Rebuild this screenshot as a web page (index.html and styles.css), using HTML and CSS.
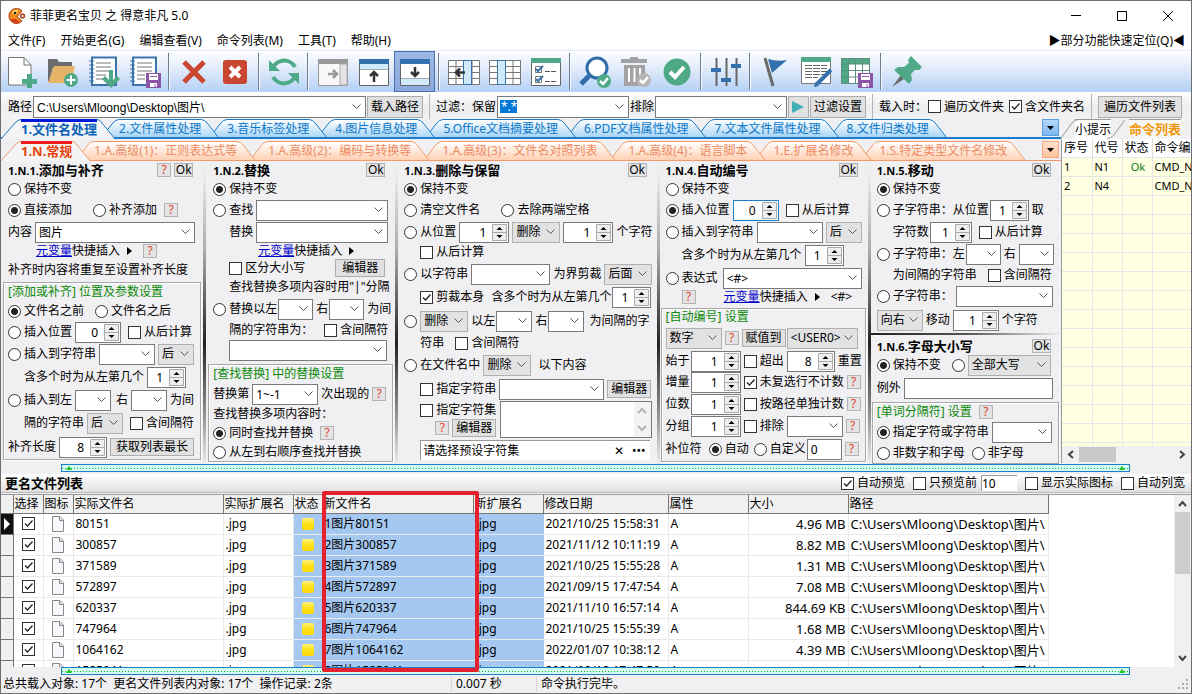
FILE: index.html
```html
<!DOCTYPE html>
<html lang="zh-CN">
<head>
<meta charset="utf-8">
<title>菲菲更名宝贝 之 得意非凡 5.0</title>
<link rel="stylesheet" href="styles.css">
</head>
<body>
<div class="window">
<header class="titlebar">
  <svg class="logo" width="18" height="18" viewBox="0 0 18 18"><path d="M14 4A7.500 7.500 0 1 0 14 14L9 9.500Z" fill="#f28a1c" stroke="#a63a10"/><path d="M2.500 12A7 7 0 0 0 12 15.500L8 12Z" fill="#d93a1a"/><path d="M4 6a5 5 0 0 1 6-3L8 8Z" fill="#ffd75e"/><circle cx="7" cy="6" r="1.300" fill="#222"/><circle cx="14.500" cy="9" r="2.300" fill="#e8542a" stroke="#8c3a20"/><circle cx="14.500" cy="9" r="1" fill="#fff"/></svg>
  <span class="caption">菲菲更名宝贝 之 得意非凡 5.0</span>
  <button class="wbtn" aria-label="最小化"><svg width="12" height="12"><path d="M1 5.500H11" stroke="#000"/></svg></button>
  <button class="wbtn" aria-label="最大化"><svg width="12" height="12"><path d="M1.500 1.500H10.500V10.500H1.500Z" fill="none" stroke="#000"/></svg></button>
  <button class="wbtn" aria-label="关闭"><svg width="12" height="12"><path d="M1 1L11 11M11 1L1 11" stroke="#000"/></svg></button>
</header>
<nav class="menu">
  <button>文件(F)</button><button>开始更名(G)</button><button>编辑查看(V)</button><button>命令列表(M)</button><button>工具(T)</button><button>帮助(H)</button><button class="push">▶部分功能快速定位(Q)◀</button>
</nav>
<div class="toolbar">
  <button aria-label="新建"><svg viewBox="0 0 32 32"><path d="M2.500 1.500H18L25 9V29H2.500Z" fill="#fff" stroke="#777"/><path d="M18 1.500V9H25" fill="none" stroke="#777"/><path d="M21 18h5v5h5v5h-5v4h-5v-4h-5v-5h5Z" fill="#4fa986"/></svg></button>
  <button aria-label="打开文件夹"><svg viewBox="0 0 32 32"><path d="M1 3H10L12 6H25V12H6L2 25H1Z" fill="#6c6c6c"/><path d="M7 10H28L24 27H1Z" fill="#e5b467"/><circle cx="24" cy="24" r="7" fill="#4fa986"/><path d="M24 19.500v9M19.500 24h9" stroke="#fff" stroke-width="2"/></svg></button>
  <button aria-label="载入列表"><svg viewBox="0 0 32 32"><path d="M4 1.500H28V29H4Z" fill="#fff" stroke="#3b72aa" stroke-width="2"/><path d="M8 7H23M8 11H23M8 15H23M8 19H18M8 23H18" stroke="#777"/><path d="M1 5h5M1 9h5M1 13h5M1 17h5M1 21h5M1 25h5" stroke="#3b72aa" stroke-dasharray="2 1"/><path d="M21 14h4v10l4-4 3 3-9 9-9-9 3-3 4 4Z" fill="#4fa986"/></svg></button>
  <button aria-label="保存列表"><svg viewBox="0 0 32 32"><path d="M4 1.500H27V29H4Z" fill="#fff" stroke="#3b72aa" stroke-width="2"/><path d="M8 7H23M8 11H23M8 15H23M8 19H16M8 23H16" stroke="#777"/><path d="M1 5h5M1 9h5M1 13h5M1 17h5M1 21h5M1 25h5" stroke="#3b72aa" stroke-dasharray="2 1"/><path d="M17 17H32V32H17Z" fill="#8a55a5"/><path d="M20 18h9v6h-9ZM21 27h7v4h-7Z" fill="#fff"/><path d="M21 20.500h7M26 28v3" stroke="#8a55a5"/></svg></button>
  <i></i>
  <button aria-label="移除"><svg viewBox="0 0 32 32"><path d="M6 6L26 26M26 6L6 26" stroke="#cb4630" stroke-width="5"/></svg></button>
  <button aria-label="清空"><svg viewBox="0 0 32 32"><rect x="4" y="4" width="24" height="24" rx="3" fill="#cb4630"/><path d="M11 11L21 21M21 11L11 21" stroke="#fff" stroke-width="4"/></svg></button>
  <i></i>
  <button aria-label="刷新"><svg viewBox="0 0 32 32"><path d="M4 14A12.500 12.500 0 0 1 27 11M28 18A12.500 12.500 0 0 1 5 21" fill="none" stroke="#4fa986" stroke-width="4"/><path d="M1 4V15H12ZM31 28V17H20Z" fill="#4fa986"/></svg></button>
  <i></i>
  <button aria-label="右侧面板"><svg viewBox="0 0 32 32"><path d="M1.500 3.500H30.500V29.500H1.500Z" fill="#f8f8f8" stroke="#999"/><path d="M1 3H31V8H1Z" fill="#9a9a9a"/><path d="M23 8h7v21h-7Z" fill="#e4e4e4" stroke="#aaa"/><path d="M11 18H20M16 14l4 4-4 4" fill="none" stroke="#999" stroke-width="2.500"/></svg></button>
  <button aria-label="上部面板"><svg viewBox="0 0 32 32"><path d="M1.500 3.500H30.500V29.500H1.500Z" fill="#fff" stroke="#666"/><path d="M1 3H31V8H1Z" fill="#3470ad"/><path d="M2 8H30V13H2Z" fill="#cfeafa"/><path d="M2 13.500H30" stroke="#aaa"/><path d="M16 26V16M12 20l4-4 4 4" fill="none" stroke="#333" stroke-width="2.500"/></svg></button>
  <button class="pressed" aria-label="下部面板"><svg viewBox="0 0 32 32"><path d="M1.500 3.500H30.500V29.500H1.500Z" fill="#fff" stroke="#666"/><path d="M1 3H31V8H1Z" fill="#3470ad"/><path d="M2 23H30V29H2Z" fill="#cfeafa"/><path d="M2 22.500H30" stroke="#aaa"/><path d="M16 11V20M12 16l4 4 4-4" fill="none" stroke="#333" stroke-width="2.500"/></svg></button>
  <i></i>
  <button aria-label="插入列"><svg viewBox="0 0 32 32"><path d="M.5 4.500H31.500V28.500H.5ZM.5 10.500H31.500M.5 16.500H31.500M.5 22.500H31.500M8 4.500V28M24 4.500V28" fill="#fff" stroke="#777"/><path d="M15.500 4.500H23.500V28.500H15.500Z" fill="#cfeafa" stroke="#3b72aa"/><path d="M17 16.500H8M12 12.500l-4 4 4 4" fill="none" stroke="#333" stroke-width="2.500"/></svg></button>
  <button aria-label="列设置"><svg viewBox="0 0 32 32"><path d="M.5 4.500H31.500V28.500H.5ZM.5 10.500H31.500M.5 16.500H31.500M.5 22.500H31.500M24 4.500V28" fill="#fff" stroke="#777"/><path d="M8.500 4.500H16.500V28.500H8.500Z" fill="#cfeafa" stroke="#3b72aa"/></svg></button>
  <button aria-label="选项"><svg viewBox="0 0 32 32"><path d="M1.500 3.500H30.500V29.500H1.500Z" fill="#fff" stroke="#666"/><path d="M1 2H31V7H1Z" fill="#4fa986"/><path d="M5.500 10.500h6v6h-6ZM5.500 20.500h6v6h-6Z" fill="none" stroke="#777"/><path d="M6 13l2 2 5-5M6 23l2 2 5-5" fill="none" stroke="#3470ad" stroke-width="2"/><path d="M15 15.500h5M21 15.500h5M15 25.500h5M21 25.500h5" stroke="#555"/></svg></button>
  <i></i>
  <button aria-label="预览"><svg viewBox="0 0 32 32"><circle cx="18" cy="12" r="10" fill="#fff" stroke="#2f6da8" stroke-width="3"/><path d="M10 20L2 28" stroke="#2f6da8" stroke-width="5"/><circle cx="25" cy="25" r="7" fill="#4fa986"/><path d="M21 25l3 3 5-6" fill="none" stroke="#fff" stroke-width="2.500"/></svg></button>
  <button aria-label="清理"><svg viewBox="0 0 32 32"><path d="M10 1h8v2h9v4H1V3h9ZM4 9H25V30H4Z" fill="#a3a3a3"/><path d="M9 12V26M14.500 12V26M20 12V20" stroke="#fff" stroke-width="2"/><circle cx="24" cy="24" r="7" fill="#b5b5b5"/><path d="M20 24l3 3 5-6" fill="none" stroke="#fff" stroke-width="2.500"/></svg></button>
  <button aria-label="执行"><svg viewBox="0 0 32 32"><circle cx="16" cy="16" r="13.500" fill="#4fa986"/><path d="M9 16l5 5 9-10" fill="none" stroke="#fff" stroke-width="4"/></svg></button>
  <i></i>
  <button aria-label="调整"><svg viewBox="0 0 32 32"><path d="M6.500 2V30M16.500 2V30M26.500 2V30" stroke="#666" stroke-width="2"/><path d="M1 12h10v4H1ZM11 22h10v4H11ZM21 8h10v4H21Z" fill="#3470ad"/></svg></button>
  <i></i>
  <button aria-label="标记"><svg viewBox="0 0 32 32"><path d="M6 2L14 30" stroke="#6b6b6b" stroke-width="3"/><path d="M9 3Q18 6 28 4L13 17Z" fill="#3470ad"/></svg></button>
  <button aria-label="编辑表格"><svg viewBox="0 0 32 32"><path d="M1.500 2.500H30.500V27.500H1.500Z" fill="#fff" stroke="#777"/><path d="M1 1H31V6H1Z" fill="#4fa986"/><path d="M5 9.500H27M5 12.500H27M5 15.500H27M5 18.500H27M5 21.500H18" stroke="#666" stroke-dasharray="7 1"/><path d="M31 14L17 28" stroke="#3470ad" stroke-width="4"/><path d="M14 31l1-5 4 4Z" fill="#3470ad"/></svg></button>
  <button aria-label="保存表格"><svg viewBox="0 0 32 32"><path d="M.5 2.500H28.500V27.500H.5Z" fill="#fff"/><path d="M0 2H29V8H0ZM0 2H7V28H0Z" fill="#4fa986"/><path d="M.5 2.500H28.500V27.500H.5ZM.5 8H28M.5 14.500H28M.5 21H28M7.500 2V28M14.500 2V28M21.500 2V28" fill="none" stroke="#5b8f7b"/><path d="M17 17H32V32H17Z" fill="#8a55a5"/><path d="M20 18h9v6h-9ZM21 27h7v4h-7Z" fill="#fff"/><path d="M21 20.500h7M26 28v3" stroke="#8a55a5"/></svg></button>
  <i></i>
  <button aria-label="置顶"><svg viewBox="0 0 32 32"><path d="M11 19L2 31L14 23Z" fill="#6b6b6b"/><path d="M21 0L32 11L29 14L25 14L21 18L22 24L19 28L4 14L8 11L14 11L19 7L18 4Z" fill="#4fa986"/></svg></button>
</div>
<div class="pathbar">
  <label for="path">路径</label><input id="path" class="combo grow" value="C:\Users\Mloong\Desktop\图片\">
  <button class="btn w56">载入路径</button><i></i>
  <label for="keep">过滤：保留</label><input id="keep" class="combo w132 hilite" value="*.*">
  <label for="drop">排除</label><input id="drop" class="combo w132">
  <button class="btn play" aria-label="应用过滤"></button><button class="btn w56">过滤设置</button><i></i>
  <span>载入时：</span><label class="opt"><input type="checkbox">遍历文件夹</label><label class="opt m4"><input type="checkbox" checked>含文件夹名</label><i></i>
  <button class="btn w84">遍历文件列表</button>
</div>
<main class="main">
<section class="left">
  <div class="tabs blue">
    <button class="on">1.文件名处理</button><button>2.文件属性处理</button><button>3.音乐标签处理</button><button>4.图片信息处理</button><button>5.Office文档摘要处理</button><button>6.PDF文档属性处理</button><button>7.文本文件属性处理</button><button>8.文件归类处理</button><button class="more" aria-label="更多"></button>
  </div>
  <div class="tabs orange">
    <button class="on">1.N.常规</button><button>1.A.高级(1)：正则表达式等</button><button class="wide">1.A.高级(2)：编码与转换等</button><button class="wide">1.A.高级(3)：文件名对照列表</button><button class="wide">1.A.高级(4)：语言脚本</button><button>1.E.扩展名修改</button><button>1.S.特定类型文件名修改</button><button class="more" aria-label="更多"></button>
  </div>
  <div class="groups">
    <fieldset class="g">
      <div class="r h18"><b><small>1.N.1.</small>添加与补齐</b><button class="q push">?</button><button class="ok">Ok</button></div>
      <div class="r h20"><label class="opt"><input type="radio" name="a">保持不变</label></div>
      <div class="r h22"><label class="opt"><input type="radio" name="a" checked>直接添加</label><label class="opt m20"><input type="radio" name="a">补齐添加</label><button class="q m4">?</button></div>
      <div class="r h22"><label for="c1">内容</label><input id="c1" class="combo w160" value="图片"></div>
      <div class="r h16 i28"><span><a href="#">元变量</a>快捷插入</span><span class="tri"></span><button class="q m8">?</button></div>
      <div class="r h22"><span>补齐时内容将重复至设置补齐长度</span></div>
      <div class="sub">
        <div class="r h18 green">[添加或补齐] 位置及参数设置</div>
        <div class="r h20"><label class="opt"><input type="radio" name="a2" checked>文件名之前</label><label class="opt m8"><input type="radio" name="a2">文件名之后</label></div>
        <div class="r h22"><label class="opt"><input type="radio" name="a2">插入位置</label><input class="spin w46" value="0" aria-label="位置"><label class="opt m4"><input type="checkbox">从后计算</label></div>
        <div class="r h22"><label class="opt"><input type="radio" name="a2">插入到字符串</label><input class="combo w56" aria-label="字符串"><select class="w36" aria-label="前后"><option>后</option></select></div>
        <div class="r h24 i16"><span>含多个时为从左第几个</span><input class="spin w39" value="1" aria-label="第几个"></div>
        <div class="r h22"><label class="opt"><input type="radio" name="a2">插入到左</label><input class="combo w36" aria-label="左"><span class="m1">右</span><input class="combo w36" aria-label="右"><span>为间</span></div>
        <div class="r h24 i16"><span>隔的字符串</span><select class="w36" aria-label="前后"><option>后</option></select><label class="opt m4"><input type="checkbox">含间隔符</label></div>
        <div class="r h24"><label for="len">补齐长度</label><input id="len" class="spin w48" value="8"><button class="btn w84">获取列表最长</button></div>
      </div>
    </fieldset>
    <fieldset class="g">
      <div class="r h18"><b><small>1.N.2.</small>替换</b><button class="ok push">Ok</button></div>
      <div class="r h20"><label class="opt"><input type="radio" name="b" checked>保持不变</label></div>
      <div class="r h22"><label class="opt"><input type="radio" name="b">查找</label><input class="combo w132" aria-label="查找"></div>
      <div class="r h22 i16"><label for="rep">替换</label><input id="rep" class="combo w132"></div>
      <div class="r h16 i45"><span><a href="#">元变量</a>快捷插入</span><span class="tri"></span></div>
      <div class="r h18 i16"><label class="opt"><input type="checkbox">区分大小写</label><button class="btn w50 push">编辑器</button></div>
      <div class="r h20 i16"><span>查找替换多项内容时用"|"分隔</span></div>
      <div class="r h24"><label class="opt"><input type="radio" name="b">替换以左</label><input class="combo w35 tight" aria-label="左"><span>右</span><input class="combo w35 tight" aria-label="右"><span>为间</span></div>
      <div class="r h18 i16"><span>隔的字符串为：</span><label class="opt m8"><input type="checkbox">含间隔符</label></div>
      <div class="r h22 i16"><input class="combo w158" aria-label="替换为"></div>
      <div class="sub t3">
        <div class="r h18 green">[查找替换] 中的替换设置</div>
        <div class="r h22"><span>替换第</span><input class="combo w66" value="1~-1" aria-label="次数"><span>次出现的</span><button class="q">?</button></div>
        <div class="r h18"><span>查找替换多项内容时：</span></div>
        <div class="r h20"><label class="opt"><input type="radio" name="b2" checked>同时查找并替换</label><button class="q m4">?</button></div>
        <div class="r h18"><label class="opt"><input type="radio" name="b2">从左到右顺序查找并替换</label></div>
      </div>
    </fieldset>
    <fieldset class="g">
      <div class="r h18"><b><small>1.N.3.</small>删除与保留</b><button class="ok push">Ok</button></div>
      <div class="r h20"><label class="opt"><input type="radio" name="c" checked>保持不变</label></div>
      <div class="r h22"><label class="opt"><input type="radio" name="c">清空文件名</label><label class="opt m20"><input type="radio" name="c">去除两端空格</label></div>
      <div class="r h22"><label class="opt"><input type="radio" name="c">从位置</label><input class="spin w50" value="1" aria-label="位置"><select class="w48" aria-label="操作"><option>删除</option></select><input class="spin w50" value="1" aria-label="个数"><span>个字符</span></div>
      <div class="r h18 i16"><label class="opt"><input type="checkbox">从后计算</label></div>
      <div class="r h26"><label class="opt"><input type="radio" name="c">以字符串</label><input class="combo w79" aria-label="字符串"><span>为界剪裁</span><select class="w48" aria-label="方向"><option>后面</option></select></div>
      <div class="r h20 i16"><label class="opt"><input type="checkbox" checked>剪裁本身</label><span class="m4">含多个时为从左第几个</span><input class="spin w39 tight" value="1" aria-label="第几个"></div>
      <div class="r h28"><input type="radio" name="c" aria-label="按间隔"><select class="w48" aria-label="操作"><option>删除</option></select><span>以左</span><input class="combo w36 tight" aria-label="左"><span>右</span><input class="combo w36 tight" aria-label="右"><span class="m1">为间隔的字</span></div>
      <div class="r h16 i16"><span>符串</span><label class="opt m8"><input type="checkbox">含间隔符</label></div>
      <div class="r h28"><label class="opt"><input type="radio" name="c">在文件名中</label><select class="w48" aria-label="操作"><option>删除</option></select><span class="m4">以下内容</span></div>
      <div class="r h20 i16"><label class="opt"><input type="checkbox">指定字符串</label><input class="combo w105" aria-label="指定字符串"><button class="btn w44">编辑器</button></div>
      <div class="charset i16"><div><div class="r h18"><label class="opt"><input type="checkbox">指定字符集</label></div><div class="r h18 endx"><button class="q">?</button><button class="btn w44">编辑器</button></div></div><textarea aria-label="指定字符集"></textarea></div>
      <div class="preset"><span>请选择预设字符集</span><button class="push" aria-label="清除">✕</button><button aria-label="更多">•••</button></div>
    </fieldset>
    <fieldset class="g">
      <div class="r h18"><b><small>1.N.4.</small>自动编号</b><button class="ok push">Ok</button></div>
      <div class="r h20"><label class="opt"><input type="radio" name="d">保持不变</label></div>
      <div class="r h22"><label class="opt"><input type="radio" name="d" checked>插入位置</label><input class="spin w46 focus" value="0" aria-label="位置"><label class="opt m4"><input type="checkbox">从后计算</label></div>
      <div class="r h22"><label class="opt"><input type="radio" name="d">插入到字符串</label><input class="combo w66" aria-label="字符串"><select class="w36" aria-label="前后"><option>后</option></select></div>
      <div class="r h24 i16"><span>含多个时为从左第几个</span><input class="spin w39" value="1" aria-label="第几个"></div>
      <div class="r h22"><label class="opt"><input type="radio" name="d">表达式</label><input class="combo w139 m1" value="&lt;#&gt;" aria-label="表达式"></div>
      <div class="r h16 i16"><button class="q">?</button><span class="m25"><a href="#">元变量</a>快捷插入</span><span class="tri"></span><span class="m8">&lt;#&gt;</span></div>
      <div class="sub t3">
        <div class="r h16 green">[自动编号] 设置</div>
        <div class="r h26"><select class="w56" aria-label="类型"><option>数字</option></select><button class="q">?</button><button class="btn w44">赋值到</button><select class="w70 tight" aria-label="变量"><option>&lt;USER0&gt;</option></select></div>
        <div class="r h20"><label for="n1">始于</label><input id="n1" class="spin w50 tight" value="1"><label class="opt"><input type="checkbox">超出</label><input class="spin w48" value="8" aria-label="超出"><span>重置</span></div>
        <div class="r h22"><label for="n2">增量</label><input id="n2" class="spin w50 tight" value="1"><label class="opt"><input type="checkbox" checked>未复选行不计数</label><button class="q">?</button></div>
        <div class="r h22"><label for="n3">位数</label><input id="n3" class="spin w50 tight" value="1"><label class="opt"><input type="checkbox">按路径单独计数</label><button class="q">?</button></div>
        <div class="r h22"><label for="n4">分组</label><input id="n4" class="spin w50 tight" value="1"><label class="opt"><input type="checkbox">排除</label><input class="combo w56" aria-label="排除"><button class="q">?</button></div>
        <div class="r h24"><span>补位符</span><label class="opt m4"><input type="radio" name="d2" checked>自动</label><label class="opt m1"><input type="radio" name="d2">自定义</label><input class="txt w35 tight" value="0" aria-label="自定义"><button class="q">?</button></div>
      </div>
    </fieldset>
    <fieldset class="g">
      <div class="r h18"><b><small>1.N.5.</small>移动</b><button class="ok push">Ok</button></div>
      <div class="r h20"><label class="opt"><input type="radio" name="e" checked>保持不变</label></div>
      <div class="r h22"><label class="opt"><input type="radio" name="e">子字符串：从位置</label><input class="spin w39 tight" value="1" aria-label="位置"><span>取</span></div>
      <div class="r h22 i16"><span>字符数</span><input class="spin w42 tight" value="1" aria-label="字符数"><label class="opt m4"><input type="checkbox">从后计算</label></div>
      <div class="r h22"><label class="opt"><input type="radio" name="e">子字符串：左</label><input class="combo w35 tight" aria-label="左"><span>右</span><input class="combo w35" aria-label="右"></div>
      <div class="r h20 i16"><span>为间隔的字符串</span><label class="opt m8"><input type="checkbox">含间隔符</label></div>
      <div class="r h22"><label class="opt"><input type="radio" name="e">子字符串：</label><input class="combo w97" aria-label="子字符串"></div>
      <div class="r h26"><select class="w46" aria-label="方向"><option>向右</option></select><span>移动</span><input class="spin w46" value="1" aria-label="字符数"><span>个字符</span></div>
      <div class="divider"></div>
      <div class="r h18"><b><small>1.N.6.</small>字母大小写</b><button class="ok push">Ok</button></div>
      <div class="r h20"><label class="opt"><input type="radio" name="f" checked>保持不变</label><input class="m8" type="radio" name="f" aria-label="转换大小写"><select class="w83" aria-label="大小写"><option>全部大写</option></select></div>
      <div class="r h26"><label for="ex">例外</label><input id="ex" class="txt w149"></div>
      <div class="sub">
        <div class="r h18 green">[单词分隔符] 设置<button class="q m4">?</button></div>
        <div class="r h22"><label class="opt"><input type="radio" name="f2" checked>指定字符或字符串</label><input class="combo w60" aria-label="字符"></div>
        <div class="r h20"><label class="opt"><input type="radio" name="f2">非数字和字母</label><label class="opt m4"><input type="radio" name="f2">非字母</label></div>
      </div>
    </fieldset>
  </div>
</section>
<aside class="right">
  <div class="tabs gray"><button>小提示</button><button class="on">命令列表</button></div>
  <div class="cmds">
    <table>
      <thead><tr><th>序号</th><th>代号</th><th>状态</th><th>命令编</th></tr></thead>
      <tbody>
        <tr><td>1</td><td>N1</td><td class="okc">Ok</td><td>CMD_N</td></tr>
        <tr><td>2</td><td>N4</td><td></td><td>CMD_N</td></tr>
        <tr><td></td><td></td><td></td><td></td></tr><tr><td></td><td></td><td></td><td></td></tr><tr><td></td><td></td><td></td><td></td></tr><tr><td></td><td></td><td></td><td></td></tr><tr><td></td><td></td><td></td><td></td></tr><tr><td></td><td></td><td></td><td></td></tr><tr><td></td><td></td><td></td><td></td></tr><tr><td></td><td></td><td></td><td></td></tr><tr><td></td><td></td><td></td><td></td></tr><tr><td></td><td></td><td></td><td></td></tr><tr><td></td><td></td><td></td><td></td></tr><tr><td></td><td></td><td></td><td></td></tr><tr><td></td><td></td><td></td><td></td></tr><tr><td></td><td></td><td></td><td></td></tr>
      </tbody>
    </table>
  </div>
  <div class="hscroll"><svg width="9" height="9"><path d="M6 1L2 4.500L6 8" fill="none" stroke="#444" stroke-width="2"/></svg><span class="thumb"></span><svg width="9" height="9"><path d="M3 1L7 4.500L3 8" fill="none" stroke="#444" stroke-width="2"/></svg></div>
</aside>
</main>
<div class="splitter"></div>
<div class="listbar">
  <b>更名文件列表</b>
  <label class="opt push"><input type="checkbox" checked>自动预览</label><label class="opt m4"><input type="checkbox">只预览前</label><input class="num" value="10" aria-label="预览数量"><label class="opt m4"><input type="checkbox">显示实际图标</label><label class="opt m4"><input type="checkbox">自动列宽</label>
</div>
<section class="list">
  <div class="scroll">
  <table class="files">
    <colgroup><col class="c12"><col class="c30"><col class="c30"><col class="c150"><col class="c70"><col class="c29"><col class="c151"><col class="c70"><col class="c125"><col class="c80"><col class="c100"><col class="c200"></colgroup>
    <thead><tr><th></th><th>选择</th><th>图标</th><th>实际文件名</th><th>实际扩展名</th><th>状态</th><th>新文件名</th><th>新扩展名</th><th>修改日期</th><th>属性</th><th>大小</th><th>路径</th></tr></thead>
    <tbody>
      <tr class="cur"><th></th><td><input type="checkbox" checked aria-label="选择"></td><td><i class="page"></i></td><td>80151</td><td>.jpg</td><td class="n"><i class="st"></i></td><td class="n">1图片80151</td><td class="n">.jpg</td><td>2021/10/25 15:58:31</td><td>A</td><td class="sz">4.96 MB</td><td class="loc">C:\Users\Mloong\Desktop\图片\</td></tr>
      <tr><th></th><td><input type="checkbox" checked aria-label="选择"></td><td><i class="page"></i></td><td>300857</td><td>.jpg</td><td class="n"><i class="st"></i></td><td class="n">2图片300857</td><td class="n">.jpg</td><td>2021/11/12 10:11:19</td><td>A</td><td class="sz">8.82 MB</td><td class="loc">C:\Users\Mloong\Desktop\图片\</td></tr>
      <tr><th></th><td><input type="checkbox" checked aria-label="选择"></td><td><i class="page"></i></td><td>371589</td><td>.jpg</td><td class="n"><i class="st"></i></td><td class="n">3图片371589</td><td class="n">.jpg</td><td>2021/10/25 15:55:28</td><td>A</td><td class="sz">1.31 MB</td><td class="loc">C:\Users\Mloong\Desktop\图片\</td></tr>
      <tr><th></th><td><input type="checkbox" checked aria-label="选择"></td><td><i class="page"></i></td><td>572897</td><td>.jpg</td><td class="n"><i class="st"></i></td><td class="n">4图片572897</td><td class="n">.jpg</td><td>2021/09/15 17:47:54</td><td>A</td><td class="sz">7.08 MB</td><td class="loc">C:\Users\Mloong\Desktop\图片\</td></tr>
      <tr><th></th><td><input type="checkbox" checked aria-label="选择"></td><td><i class="page"></i></td><td>620337</td><td>.jpg</td><td class="n"><i class="st"></i></td><td class="n">5图片620337</td><td class="n">.jpg</td><td>2021/11/10 16:57:14</td><td>A</td><td class="sz">844.69 KB</td><td class="loc">C:\Users\Mloong\Desktop\图片\</td></tr>
      <tr><th></th><td><input type="checkbox" checked aria-label="选择"></td><td><i class="page"></i></td><td>747964</td><td>.jpg</td><td class="n"><i class="st"></i></td><td class="n">6图片747964</td><td class="n">.jpg</td><td>2021/10/25 15:55:39</td><td>A</td><td class="sz">1.68 MB</td><td class="loc">C:\Users\Mloong\Desktop\图片\</td></tr>
      <tr><th></th><td><input type="checkbox" checked aria-label="选择"></td><td><i class="page"></i></td><td>1064162</td><td>.jpg</td><td class="n"><i class="st"></i></td><td class="n">7图片1064162</td><td class="n">.jpg</td><td>2022/01/07 10:38:12</td><td>A</td><td class="sz">4.39 MB</td><td class="loc">C:\Users\Mloong\Desktop\图片\</td></tr>
      <tr><th></th><td><input type="checkbox" checked aria-label="选择"></td><td><i class="page"></i></td><td>1585041</td><td>.jpg</td><td class="n"><i class="st"></i></td><td class="n">8图片1585041</td><td class="n">.jpg</td><td>2021/08/18 17:47:50</td><td>A</td><td class="sz">3.45 MB</td><td class="loc">C:\Users\Mloong\Desktop\图片\</td></tr>
    </tbody>
  </table>
  </div>
  <div class="vscroll"><svg width="9" height="9"><path d="M1 6L4.500 2L8 6" fill="none" stroke="#444" stroke-width="2"/></svg><span class="thumb"></span><svg width="9" height="9"><path d="M1 3L4.500 7L8 3" fill="none" stroke="#444" stroke-width="2"/></svg></div>
  <div class="mark"></div>
</section>
<div class="splitter"></div>
<footer class="status"><span class="s1">总共载入对象: 17个&nbsp; 更名文件列表内对象: 17个&nbsp; 操作记录: 2条</span><span class="s2">0.007 秒</span><span class="s3">命令执行完毕。</span><svg width="12" height="12"><path d="M9 1h2v2h-2ZM5 5h2v2h-2ZM9 5h2v2h-2ZM1 9h2v2h-2ZM5 9h2v2h-2ZM9 9h2v2h-2Z" fill="#aaa"/></svg></footer>
</div>
</body>
</html>
```
FILE: styles.css
```css
* { box-sizing: border-box; }
body { margin: 0; }
body, button, input, select, textarea { font: 12px/16px "Noto Sans", "Noto Sans CJK SC", sans-serif; color: #000; }
button, input, select { margin: 0; padding: 0; }
button { white-space: nowrap; }
.window { display: flex; flex-direction: column; height: 100vh; overflow: hidden; border: 1px solid #6e6e6e; background: #f0eff1; white-space: nowrap; }
.push { margin-left: auto; }

.titlebar { display: flex; align-items: center; height: 30px; flex: none; background: #fff; padding-left: 7px; }
.caption { margin: 0 auto 0 4px; }
.wbtn { width: 46px; height: 30px; border: 0; background: none; }
.wbtn svg { display: block; margin: auto; }
.menu { display: flex; align-items: center; gap: 15px; height: 19px; flex: none; background: #fff; padding: 0 6px 0 7px; }
.menu button { border: 0; background: none; }

.toolbar { display: flex; align-items: stretch; height: 42px; flex: none; border-top: 1px solid #e6ebf2; background: linear-gradient(#fdfeff, #e3edfb 40%, #b3d0f6); }
.toolbar button { width: 41px; flex: none; border: 0; background: none; display: grid; place-items: center; }
.toolbar .pressed { background: linear-gradient(#9db8e4, #8aa8dc); border: 1px solid #4a6eb0; }
.toolbar svg { width: 32px; height: 32px; }
.toolbar i { width: 2px; flex: none; margin: 2px 3px; background: #6f7d91; border-right: 1px solid #f6f9ff; }

.pathbar { display: flex; align-items: center; gap: 1px; height: 27px; flex: none; padding: 2px 9px 0 7px; background: linear-gradient(#fff, #ececee 60%, #f3f3f5); }
.pathbar i { align-self: stretch; width: 1px; margin: 0 5px; background: #b5b5b8; }
.pathbar .combo { height: 22px; }
.pathbar .btn { height: 22px; }

.combo, .spin, .txt { flex: none; height: 21px; border: 1px solid #7a7a7a; border-radius: 0; background: #fff; padding: 0 3px; outline: 0; }
.grow { flex: 1 1 0; min-width: 100px; font-family: "Liberation Sans", "Noto Sans CJK SC", sans-serif; }
.combo { background: #fff url('data:image/svg+xml,<svg xmlns="http://www.w3.org/2000/svg" width="9" height="6"><path d="M.5 .5L4.500 4.500L8.500 .5" fill="none" stroke="%23555"/></svg>') no-repeat right 4px center; padding-right: 16px; }
.combo.hilite { color: #fff; background: url('data:image/svg+xml,<svg xmlns="http://www.w3.org/2000/svg" width="9" height="6"><path d="M.5 .5L4.500 4.500L8.500 .5" fill="none" stroke="%23555"/></svg>') no-repeat right 4px center, linear-gradient(#0078d7, #0078d7) no-repeat 2px center / 17px 13px, #fff; }
.spin { text-align: right; padding-right: 22px; background: #fff url('data:image/svg+xml,<svg xmlns="http://www.w3.org/2000/svg" width="15" height="17"><path d="M.5 .5H14.500V16.500H.5ZM.5 8.500H14.500" fill="%23eee" stroke="%23aaa"/><path d="M4.500 6L7.500 3L10.500 6ZM4.500 11L7.500 14L10.500 11Z"/></svg>') no-repeat right 1px center; }
.spin.focus { border-color: #1c80cc; }
select { appearance: none; flex: none; height: 21px; border: 1px solid #b0b0b0; border-radius: 0; padding: 0 3px; background: #e2e2e3 url('data:image/svg+xml,<svg xmlns="http://www.w3.org/2000/svg" width="9" height="6"><path d="M.5 .5L4.500 4.500L8.500 .5" fill="none" stroke="%23555"/></svg>') no-repeat right 4px center; }
.btn { flex: none; height: 18px; line-height: 14px; border: 1px solid #adadad; background: #e1e1e1; text-align: center; }
.q, .ok { flex: none; height: 14px; line-height: 12px; border: 1px solid #b4b4b4; background: #e3e3e3; }
.q { width: 14px; color: #e8402a; }
.ok { width: 19px; }
.play { width: 21px; background: #e1e1e1 url('data:image/svg+xml,<svg xmlns="http://www.w3.org/2000/svg" width="12" height="12"><path d="M0 0L12 6L0 12Z" fill="%2341b0b8"/></svg>') no-repeat center; }
.opt { display: inline-flex; align-items: center; gap: 3px; flex: none; }
input[type=checkbox], input[type=radio] { appearance: none; flex: none; width: 13px; height: 13px; border: 1px solid #333; background: #fff; }
input[type=radio] { border-radius: 50%; }
input[type=radio]:checked { background: radial-gradient(circle, #222 3px, #fff 4px); }
input[type=checkbox]:checked { background: #fff url('data:image/svg+xml,<svg xmlns="http://www.w3.org/2000/svg" width="11" height="11"><path d="M2 5.500L4.500 8L9.500 2.500" fill="none" stroke="%23222" stroke-width="1.300"/></svg>') center; }
a { color: #00c; }
.tri { width: 0; height: 0; border: 4px solid transparent; border-left: 5px solid #000; border-right: 0; margin-left: 4px; }

.main { display: flex; flex: none; }
.left { flex: 1; min-width: 0; }
.tabs { display: flex; position: relative; height: 20px; }
.tabs button { position: relative; flex: none; border: 0; line-height: 19px; padding: 0 18px; margin-left: -10px; }
.tabs button:first-child { margin-left: 0; padding-left: 20px; z-index: 9; }
.tabs button:nth-child(2) { z-index: 8; margin-left: -14px; }
.tabs button:nth-child(3) { z-index: 7; }
.tabs button:nth-child(4) { z-index: 6; }
.tabs button:nth-child(5) { z-index: 5; }
.tabs button:nth-child(6) { z-index: 4; }
.tabs button:nth-child(7) { z-index: 3; }
.tabs .wide { margin-left: -5px; }
.tabs .on { font-weight: bold; font-size: 13px; }
.blue { border-bottom: 2px solid #1b7dcb; }
.blue button { color: #0b78c8; background: url('data:image/svg+xml,<svg xmlns="http://www.w3.org/2000/svg" width="18" height="20"><defs><linearGradient id="g" x2="0" y2="1"><stop stop-color="%23fff"/><stop offset="1" stop-color="%23a5d3f5"/></linearGradient></defs><path d="M0 19L11 5Q14 .5 18 .5V20H0Z" fill="url(%23g)"/><path d="M0 19L11 5Q14 .5 18 .5" fill="none" stroke="%231b7dcb"/></svg>') no-repeat left top, url('data:image/svg+xml,<svg xmlns="http://www.w3.org/2000/svg" width="18" height="20"><defs><linearGradient id="g" x2="0" y2="1"><stop stop-color="%23fff"/><stop offset="1" stop-color="%23a5d3f5"/></linearGradient></defs><path d="M18 19L7 5Q4 .5 0 .5V20H18Z" fill="url(%23g)"/><path d="M18 19L7 5Q4 .5 0 .5" fill="none" stroke="%231b7dcb"/></svg>') no-repeat right top, linear-gradient(#1b7dcb 1px, #fff 1px, #a5d3f5) content-box; }
.blue .on { color: #0a62b8; height: 20px; background: url('data:image/svg+xml,<svg xmlns="http://www.w3.org/2000/svg" width="20" height="20"><path d="M0 20L14 4Q17 .5 20 .5V20Z" fill="%23f4f4f6"/><path d="M0 20L14 4Q17 .5 20 .5" fill="none" stroke="%231b7dcb"/></svg>') no-repeat left top, url('data:image/svg+xml,<svg xmlns="http://www.w3.org/2000/svg" width="18" height="20"><path d="M18 20L5 4Q3 .5 0 .5V20Z" fill="%23f4f4f6"/><path d="M18 20L5 4Q3 .5 0 .5" fill="none" stroke="%231b7dcb"/></svg>') no-repeat right top, linear-gradient(#0018d8 3px, #f4f4f6 3px) content-box; }
.orange { margin-top: 2px; border-bottom: 1px solid #f39a6c; }
.orange button { color: #ee8a60; background: url('data:image/svg+xml,<svg xmlns="http://www.w3.org/2000/svg" width="18" height="20"><defs><linearGradient id="g" x2="0" y2="1"><stop stop-color="%23fff"/><stop offset="1" stop-color="%23ffd0b2"/></linearGradient></defs><path d="M0 19L11 5Q14 .5 18 .5V20H0Z" fill="url(%23g)"/><path d="M0 19L11 5Q14 .5 18 .5" fill="none" stroke="%23f39a6c"/></svg>') no-repeat left top, url('data:image/svg+xml,<svg xmlns="http://www.w3.org/2000/svg" width="18" height="20"><defs><linearGradient id="g" x2="0" y2="1"><stop stop-color="%23fff"/><stop offset="1" stop-color="%23ffd0b2"/></linearGradient></defs><path d="M18 19L7 5Q4 .5 0 .5V20H18Z" fill="url(%23g)"/><path d="M18 19L7 5Q4 .5 0 .5" fill="none" stroke="%23f39a6c"/></svg>') no-repeat right top, linear-gradient(#f39a6c 1px, #fff 1px, #ffd0b2) content-box; }
.orange .on { color: #e8420c; height: 20px; background: url('data:image/svg+xml,<svg xmlns="http://www.w3.org/2000/svg" width="20" height="20"><path d="M0 20L14 4Q17 .5 20 .5V20Z" fill="%23f4f4f6"/><path d="M0 20L14 4Q17 .5 20 .5" fill="none" stroke="%23f39a6c"/></svg>') no-repeat left top, url('data:image/svg+xml,<svg xmlns="http://www.w3.org/2000/svg" width="18" height="20"><path d="M18 20L5 4Q3 .5 0 .5V20Z" fill="%23f4f4f6"/><path d="M18 20L5 4Q3 .5 0 .5" fill="none" stroke="%23f39a6c"/></svg>') no-repeat right top, linear-gradient(#ee1c1c 3px, #f4f4f6 3px) content-box; }
.tabs .more { width: 17px; height: 17px; padding: 0; margin-left: auto; margin-right: 2px; border: 1px solid #5a9ee0; background: url('data:image/svg+xml,<svg xmlns="http://www.w3.org/2000/svg" width="7" height="4"><path d="M0 0H7L3.500 4Z"/></svg>') no-repeat center, linear-gradient(#b5d8fb, #7db8f2); }
.orange .more { border-color: #f5a880; background: url('data:image/svg+xml,<svg xmlns="http://www.w3.org/2000/svg" width="7" height="4"><path d="M0 0H7L3.500 4Z"/></svg>') no-repeat center, linear-gradient(#ffe0cc, #ffc39c); }

.groups { display: grid; grid-template-columns: 205fr 192fr 261fr 211fr 190fr; }
.g { min-width: 0; margin: 0; border: 0; border-right: 3px solid; border-image: linear-gradient(#eee 4%, #aaa 30%, #222 60%, #999 85%, #eee) 1; padding: 0 10px 0 7px; }
.g:nth-child(n+3) { padding-left: 6px; }
.g:last-child { border-right: 0; }
.r { display: flex; align-items: center; gap: 3px; }
.r > * { flex: none; }
.r b { font-size: 13px; }
.r small { font-size: 11px; }
.h16 { height: 16px; } .h18 { height: 18px; } .h20 { height: 20px; } .h22 { height: 22px; }
.h24 { height: 24px; } .h26 { height: 26px; } .h28 { height: 28px; }
.i16 { padding-left: 16px; } .i28 { padding-left: 28px; } .i45 { padding-left: 45px; }
.m1 { margin-left: 2px; } .m4 { margin-left: 4px; } .m8 { margin-left: 8px; } .m20 { margin-left: 18px; } .m25 { margin-left: 25px; }
.tight { margin-left: -2px; }
.w35 { width: 35px; } .w36 { width: 36px; } .w39 { width: 39px; } .w42 { width: 42px; } .w44 { width: 44px; }
.w46 { width: 46px; } .w48 { width: 48px; } .w50 { width: 50px; } .w56 { width: 56px; } .w60 { width: 60px; }
.w66 { width: 66px; } .w70 { width: 71px; } .w79 { width: 79px; } .w83 { width: 83px; } .w84 { width: 84px; }
.w97 { width: 97px; } .w105 { width: 105px; } .w132 { width: 132px; } .w139 { width: 139px; } .w149 { width: 149px; }
.w158 { width: 158px; } .w160 { width: 160px; }
.sub { margin: 1px -8px 0 -5px; padding-left: 4px; border: 1px solid #a8a8a8; box-shadow: inset 1px 1px #fff, 1px 1px #fff; }
.t3 { margin-top: 3px; }
.green { color: #0a8a0a; }
.charset { display: flex; justify-content: space-between; height: 40px; padding-top: 2px; margin-right: -5px; }
.endx { justify-content: flex-end; }
textarea { width: 152px; height: 37px; resize: none; border: 1px solid #7a7a7a; background: #fff url('data:image/svg+xml,<svg xmlns="http://www.w3.org/2000/svg" width="17" height="35"><path d="M0 0H17V35H0Z" fill="%23f3f3f3"/><path d="M4 11L8 7L12 11M4 24L8 28L12 24" fill="none" stroke="%23b5b5b5" stroke-width="2"/></svg>') no-repeat right; }
.preset { display: flex; align-items: center; gap: 8px; height: 20px; margin: 1px -3px 0 16px; padding: 0 4px 0 2px; border: 1px solid #999; border-width: 1px 0 0 1px; background: #fff; }
.preset button { border: 0; background: none; }
.preset .push { margin-left: auto; }
.divider { height: 4px; margin: 0 -10px 0 -6px; background: linear-gradient(90deg, #222, #555 50%, #eee); border-bottom: 2px solid #f0eff1; }

.right { width: 130px; flex: none; display: flex; flex-direction: column; }
.gray { overflow: hidden; }
.gray button { color: #000; background: url('data:image/svg+xml,<svg xmlns="http://www.w3.org/2000/svg" width="18" height="20"><path d="M0 19L11 4Q14 .5 18 .5" fill="none" stroke="%23999"/></svg>') no-repeat left top, url('data:image/svg+xml,<svg xmlns="http://www.w3.org/2000/svg" width="18" height="20"><path d="M18 .5L7 16Q4 19.500 0 19.500" fill="none" stroke="%23999"/></svg>') no-repeat right top, linear-gradient(#999 1px, #fff 1px) content-box; }
.gray button:first-child { padding: 0 14px 0 14px; }
.gray .on { color: #f0980c; padding: 0 0 0 18px; background: linear-gradient(#999 1px, #f6f6f6 1px) content-box; }
.cmds { flex: 1 1 0; overflow: hidden; border-left: 1px solid #999; background: #ffffe1; }
.cmds table { border-collapse: collapse; table-layout: fixed; width: 129px; }
.cmds th { width: 30px; height: 18px; padding: 0 0 0 2px; background: #fff; font-weight: normal; text-align: left; border-right: 1px solid #ddd; overflow: hidden; }
.cmds th:last-child { width: auto; }
.cmds td { height: 19px; padding: 0 0 0 2px; border: 1px solid #e6e6e6; border-left: 0; overflow: hidden; line-height: 16px; font-size: 11px; }
.cmds td:last-child, .cmds th:last-child { border-right: 0; }
.cmds .okc { color: #0a7a1a; text-align: center; }
.hscroll { display: flex; align-items: center; height: 17px; padding: 0 5px; margin-bottom: 1px; background: #f0f0f0; border-left: 1px solid #999; }
.hscroll .thumb { width: 37px; height: 15px; margin: 0 auto 0 3px; background: #c8c8c8; }

.splitter { flex: none; height: 8px; margin: 0 61px 0 60px; border: 1px solid #1f7fc4; background: url('data:image/svg+xml,<svg xmlns="http://www.w3.org/2000/svg" width="6" height="4"><path d="M0 4L3 0L6 4Z" fill="%231fc41f"/></svg>') no-repeat 4px center, url('data:image/svg+xml,<svg xmlns="http://www.w3.org/2000/svg" width="6" height="4"><path d="M0 4L3 0L6 4Z" fill="%231fc41f"/></svg>') no-repeat right 4px center, url('data:image/svg+xml,<svg xmlns="http://www.w3.org/2000/svg" width="3" height="1"><path d="M0 0H1V1H0Z" fill="%231fb81f"/></svg>') repeat-x left center, #d2fbf3; }
.listbar { display: flex; align-items: center; gap: 4px; height: 19px; flex: none; margin-top: 2px; padding: 0 6px 0 4px; background: linear-gradient(#fff, #e0dfe1); border-bottom: 1px solid #bbb; }
.listbar b { font-size: 13px; }
.num { width: 36px; height: 16px; border: 1px solid #999; border-width: 1px 0 0 1px; }
.list { position: relative; display: flex; flex: 1 1 0; min-height: 0; margin-top: 1px; }
.scroll { flex: 1; overflow: hidden; background: #fff; border-top: 1px solid #999; }
.files { border-collapse: collapse; table-layout: fixed; width: 1047px; }
.c12 { width: 12px; } .c29 { width: 29px; } .c30 { width: 30px; } .c70 { width: 70px; } .c80 { width: 80px; }
.c100 { width: 100px; } .c125 { width: 125px; } .c150 { width: 150px; } .c151 { width: 151px; } .c200 { width: 200px; }
.files th { height: 18px; padding: 0 1px; font-weight: normal; text-align: left; background: #f0f0f0; border-right: 1px solid #777; border-bottom: 1px solid #777; }
.files td { height: 21px; padding: 0 2px; border-right: 1px solid #e8e8e8; border-bottom: 1px solid #eaeaea; overflow: hidden; }
.files td:nth-child(2), .files td:nth-child(3), .files td:nth-child(6) { text-align: center; line-height: 1px; }
.files td input { display: block; margin: auto; }
.files .n { background: #a5c8f0; border-right-color: #a5c8f0; }
.files .sz { text-align: right; font-size: 13px; }
.files .loc { font-size: 13px; }
.files .cur th { background: #111 url('data:image/svg+xml,<svg xmlns="http://www.w3.org/2000/svg" width="6" height="12"><path d="M0 0L6 6L0 12Z" fill="%23fff"/></svg>') no-repeat center; }
.page { display: block; width: 12px; height: 16px; margin: auto; background: url('data:image/svg+xml,<svg xmlns="http://www.w3.org/2000/svg" width="12" height="16"><path d="M.5 .5H8L11.500 4V15.500H.5Z" fill="%23f7f7fc" stroke="%23888"/><path d="M7.500 .5V4.500H11.500" fill="%23ddd" stroke="%23888"/></svg>'); }
.st { display: block; width: 12px; height: 12px; margin: auto; border-radius: 2px; background: linear-gradient(#fff27a, #ffe11a 50%, #fcd808); }
.vscroll { display: flex; flex-direction: column; align-items: center; width: 17px; flex: none; padding: 5px 0; background: #f0f0f0; border-top: 1px solid #999; }
.vscroll .thumb { width: 15px; height: 62px; margin: 3px 0 auto; background: #cdcdcd; }
.mark { position: absolute; left: 321px; top: -3px; bottom: -5px; width: 157px; border: 4px solid #e5202f; border-radius: 2px; z-index: 2; }
.status { display: flex; align-items: center; height: 18px; flex: none; padding: 0 2px; }
.s1 { width: 448px; }
.s2 { width: 85px; padding-left: 4px; border-left: 1px solid #d5d5d5; }
.s3 { flex: 1; padding-left: 4px; border-left: 1px solid #d5d5d5; }
```
